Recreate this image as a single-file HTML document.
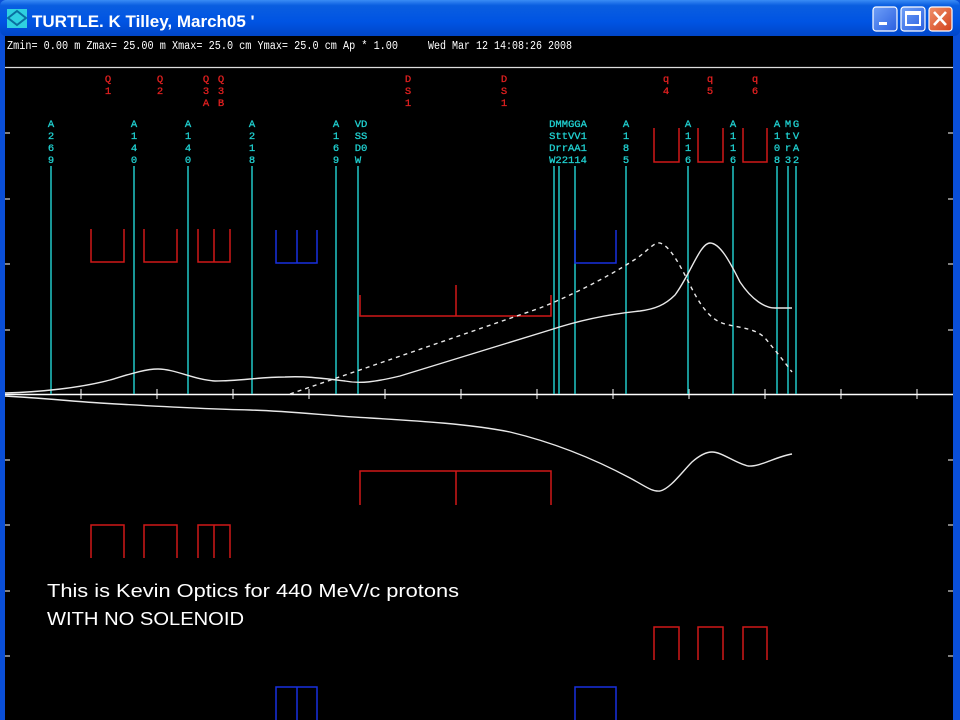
<!DOCTYPE html>
<html><head><meta charset="utf-8"><style>
html,body{margin:0;padding:0;width:960px;height:720px;overflow:hidden;background:#000}
</style></head><body>
<svg width="960" height="720" viewBox="0 0 960 720" xmlns="http://www.w3.org/2000/svg">
<defs>
<linearGradient id="tb" x1="0" y1="0" x2="0" y2="1">
<stop offset="0" stop-color="#3a8cf5"/><stop offset="0.15" stop-color="#0a5ee0"/><stop offset="0.6" stop-color="#0054e3"/><stop offset="1" stop-color="#0046c8"/></linearGradient>
<linearGradient id="bb" x1="0" y1="0" x2="1" y2="1"><stop offset="0" stop-color="#6fa0f8"/><stop offset="1" stop-color="#2a5fe0"/></linearGradient>
<linearGradient id="cb" x1="0" y1="0" x2="1" y2="1"><stop offset="0" stop-color="#f0906a"/><stop offset="1" stop-color="#d2421c"/></linearGradient>
</defs>
<rect x="0" y="0" width="960" height="720" fill="#0a4fd8"/>
<rect x="0" y="0" width="960" height="36" rx="6" fill="url(#tb)"/>
<rect x="5" y="36" width="948" height="684" fill="#000"/>
<rect x="7" y="9" width="20" height="19" fill="#2fd0e0"/>
<path d="M8 18 L17 11 L26 18 L17 25 Z" fill="none" stroke="#0a70a0" stroke-width="2"/>
<text x="32" y="27" font-family="Liberation Sans,sans-serif" font-weight="bold" font-size="17" fill="#fff">TURTLE. K Tilley, March05 '</text>
<rect x="873" y="7" width="24" height="24" rx="3" fill="url(#bb)" stroke="#fff" stroke-width="1.2"/>
<rect x="879" y="22" width="8" height="3" fill="#fff"/>
<rect x="901" y="7" width="24" height="24" rx="3" fill="url(#bb)" stroke="#fff" stroke-width="1.2"/>
<rect x="906" y="12" width="14" height="13" fill="none" stroke="#fff" stroke-width="2"/><rect x="906" y="12" width="14" height="3" fill="#fff"/>
<rect x="929" y="7" width="23" height="24" rx="3" fill="url(#cb)" stroke="#fff" stroke-width="1.2"/>
<path d="M934 12 L946 25 M946 12 L934 25" stroke="#fff" stroke-width="2.6"/>
<g font-family="Liberation Mono,monospace" font-size="11.5" fill="#fff" style="white-space:pre">
<text x="7" y="49" textLength="391" lengthAdjust="spacingAndGlyphs">Zmin=  0.00 m Zmax= 25.00 m Xmax= 25.0 cm Ymax= 25.0 cm Ap * 1.00</text>
<text x="428" y="49" textLength="144" lengthAdjust="spacingAndGlyphs">Wed Mar 12 14:08:26 2008</text>
</g>
<line x1="5" y1="67.5" x2="953" y2="67.5" stroke="#ddd" stroke-width="1.2"/>
<line x1="5" y1="394.5" x2="953" y2="394.5" stroke="#fff" stroke-width="1.5"/>
<g stroke="#fff" stroke-width="1">
<path d="M5 133h5M5 199h5M5 264h5M5 330h5M5 460h5M5 525h5M5 591h5M5 656h5M948 133h5M948 199h5M948 264h5M948 330h5M948 460h5M948 525h5M948 591h5M948 656h5"/>
<path d="M81 389v10M157 389v10M233 389v10M309 389v10M385 389v10M461 389v10M537 389v10M613 389v10M689 389v10M765 389v10M841 389v10M917 389v10"/>
</g>
<g stroke="#20c8c8" stroke-width="1.5">
<path d="M51 166V394M134 166V394M188 166V394M252 166V394M336 166V394M358 166V394M554 166V394M559 166V394M575 166V394M626 166V394M688 166V394M733 166V394M777 166V394M788 166V394M796 166V394"/>
</g>
<g font-family="Liberation Mono,monospace" font-size="10.5" fill="#20d0d0" stroke="#20d0d0" stroke-width="0.3" text-anchor="middle">
<text x="51" y="127">A</text><text x="51" y="139">2</text><text x="51" y="151">6</text><text x="51" y="163">9</text>
<text x="134" y="127">A</text><text x="134" y="139">1</text><text x="134" y="151">4</text><text x="134" y="163">0</text>
<text x="188" y="127">A</text><text x="188" y="139">1</text><text x="188" y="151">4</text><text x="188" y="163">0</text>
<text x="252" y="127">A</text><text x="252" y="139">2</text><text x="252" y="151">1</text><text x="252" y="163">8</text>
<text x="336" y="127">A</text><text x="336" y="139">1</text><text x="336" y="151">6</text><text x="336" y="163">9</text>
<text x="361" y="127">VD</text><text x="361" y="139">SS</text><text x="361" y="151">D0</text><text x="358" y="163">W</text>
<text x="568" y="127">DMMGGA</text><text x="568" y="139">SttVV1</text><text x="568" y="151">DrrAA1</text><text x="568" y="163">W22114</text>
<text x="626" y="127">A</text><text x="626" y="139">1</text><text x="626" y="151">8</text><text x="626" y="163">5</text>
<text x="688" y="127">A</text><text x="688" y="139">1</text><text x="688" y="151">1</text><text x="688" y="163">6</text>
<text x="733" y="127">A</text><text x="733" y="139">1</text><text x="733" y="151">1</text><text x="733" y="163">6</text>
<text x="777" y="127">A</text><text x="777" y="139">1</text><text x="777" y="151">0</text><text x="777" y="163">8</text>
<text x="788" y="127">M</text><text x="788" y="139">t</text><text x="788" y="151">r</text><text x="788" y="163">3</text>
<text x="796" y="127">G</text><text x="796" y="139">V</text><text x="796" y="151">A</text><text x="796" y="163">2</text>
</g>
<g font-family="Liberation Mono,monospace" font-size="10.5" fill="#e02020" stroke="#e02020" stroke-width="0.3" text-anchor="middle">
<text x="108" y="82">Q</text><text x="108" y="94">1</text>
<text x="160" y="82">Q</text><text x="160" y="94">2</text>
<text x="206" y="82">Q</text><text x="206" y="94">3</text><text x="206" y="106">A</text>
<text x="221" y="82">Q</text><text x="221" y="94">3</text><text x="221" y="106">B</text>
<text x="408" y="82">D</text><text x="408" y="94">S</text><text x="408" y="106">1</text>
<text x="504" y="82">D</text><text x="504" y="94">S</text><text x="504" y="106">1</text>
<text x="666" y="82">q</text><text x="666" y="94">4</text>
<text x="710" y="82">q</text><text x="710" y="94">5</text>
<text x="755" y="82">q</text><text x="755" y="94">6</text>
</g>
<g fill="none" stroke-width="1.5">
<g stroke="#d01818">
<path d="M91 229V262H124V229M144 229V262H177V229M198 229V262H230V229M214 229V262"/>
<path d="M360 295V316H551V295M456 285V316"/>
<path d="M654 128V162H679V128M698 128V162H723V128M743 128V162H767V128"/>
<path d="M360 505V471H551V505M456 471V505"/>
<path d="M91 558V525H124V558M144 558V525H177V558M198 558V525H230V558M214 525V558"/>
<path d="M654 660V627H679V660M698 660V627H723V660M743 660V627H767V660"/>
</g>
<g stroke="#1830e0">
<path d="M276 230V263H317V230M297 230V263"/>
<path d="M575 230V263H616V230"/>
<path d="M276 720V687H317V720M297 687V720"/>
<path d="M575 720V687H616V720"/>
</g>
</g>
<g fill="none" stroke="#e8e8e8" stroke-width="1.4">
<path d="M5 393 C40 392 80 388 110 380 C130 374 145 369 158 369 C175 369 195 380 215 381 C240 381 260 377 285 377 C305 376 320 378 345 381 C360 384 375 382 400 376 L550 330 C580 320 610 314 640 311 C655 309 665 305 675 295 C690 275 700 243 710 243 C720 243 730 262 740 282 C752 300 765 308 775 308 L792 308"/>
<path d="M290 394 L540 308 C580 292 620 270 640 256 C650 248 655 242 660 243 C670 246 680 265 690 285 C700 305 710 320 725 324 C740 328 755 328 765 338 C775 350 783 360 792 372" stroke-dasharray="4 4"/>
<path d="M5 396 C40 398 70 401 100 403 C150 406 200 409 250 410 C290 411 330 416 370 418 C420 421 470 424 510 432 C560 444 600 462 630 478 C645 486 652 492 660 491 C670 489 682 472 692 462 C700 455 706 452 712 452 C722 452 735 463 748 466 C760 467 775 457 792 454"/>
</g>
<g font-family="Liberation Sans,sans-serif" font-size="18" fill="#fff">
<text x="47" y="597" textLength="412" lengthAdjust="spacingAndGlyphs">This is Kevin Optics for 440 MeV/c protons</text>
<text x="47" y="625" textLength="197" lengthAdjust="spacingAndGlyphs">WITH NO SOLENOID</text>
</g>
</svg>
</body></html>
